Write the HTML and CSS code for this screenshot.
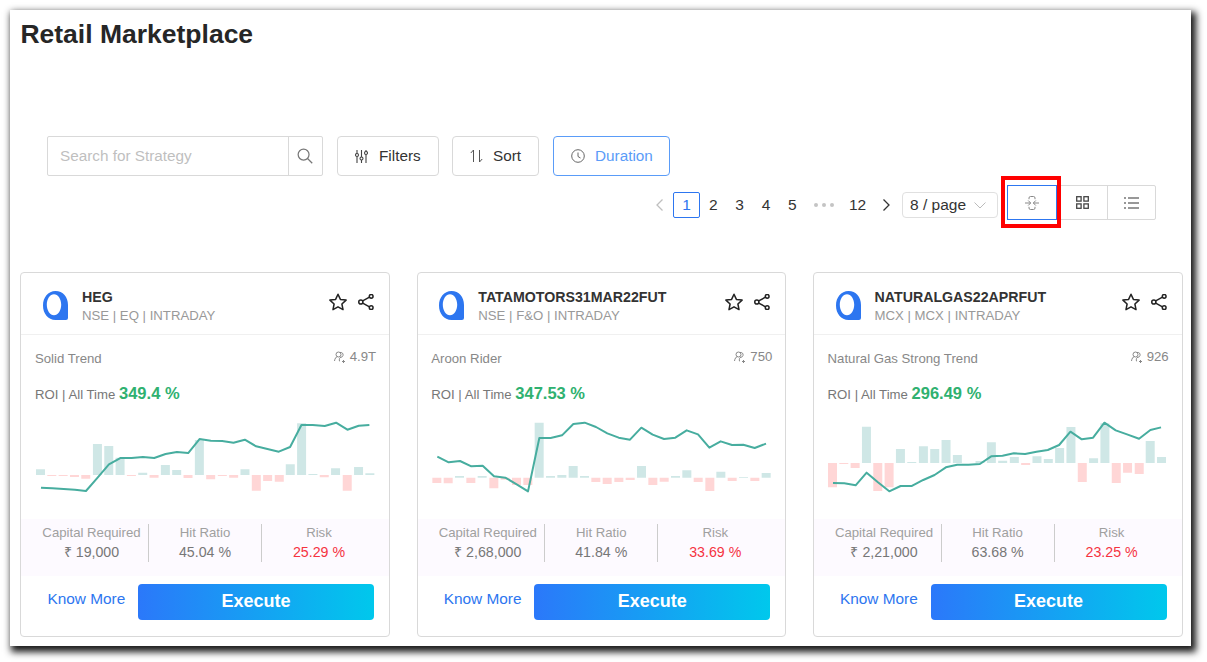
FILE: index.html
```html
<!DOCTYPE html>
<html>
<head>
<meta charset="utf-8">
<title>Retail Marketplace</title>
<link rel="stylesheet" href="styles.css">
</head>
<body>
<svg class="defs">
  <defs>
    <symbol id="logo" viewBox="0 0 25 29"><path fill-rule="evenodd" d="M12.500 0C20 0 25 6 25 14V27a2 2 0 0 1-2 2H12.500C5 29 0 22.500 0 14.500S5 0 12.500 0zM11 3.300C7 3.300 3.800 8 3.800 13.800S7 24.300 11 24.300s7.200-4.700 7.200-10.500S15 3.300 11 3.300z"/></symbol>
    <symbol id="star" viewBox="0 0 18 18"><path fill="none" stroke="currentColor" stroke-width="1.500" stroke-linejoin="round" d="M9 1.200l2.400 5.200 5.700.7-4.200 3.900 1.100 5.600L9 13.800l-5 2.800 1.100-5.600L.9 7.100l5.700-.7z"/></symbol>
    <symbol id="share" viewBox="0 0 17 17"><g fill="none" stroke="currentColor" stroke-width="1.600"><circle cx="3" cy="8.500" r="2.200"/><circle cx="14" cy="2.500" r="2"/><circle cx="14" cy="14.500" r="2"/><path d="M5 7.400l7.200-4M5 9.600l7.200 4"/></g></symbol>
    <symbol id="users" viewBox="0 0 12 12"><g fill="none" stroke="currentColor" stroke-width="1"><circle cx="4.500" cy="3.500" r="2.500"/><path d="M.5 10c.3-2.500 1.500-4 3-4.500M6 1.500c2-.5 3.500 1 3 3-.3 1-1 1.700-2 1.800-1.500 0-2 2-1.500 4M9.500 9v3M8 10.500h3"/></g></symbol>
  </defs>
</svg>
<div class="frame">
  <h1 class="title">Retail Marketplace</h1>

  <div class="toolbar">
    <div class="search">
      <span class="search-text">Search for Strategy</span>
      <span class="search-btn">
        <svg width="16" height="16" viewBox="0 0 17 17" fill="none" stroke="#777" stroke-width="1.300"><circle cx="7" cy="7" r="5.800"/><path d="M11.200 11.200l5 5"/></svg>
      </span>
    </div>
    <div class="btn btn-filters">
      <svg width="13" height="13" viewBox="0 0 13 13" fill="none" stroke="#444" stroke-width="1.100"><path d="M2 0v13M6.500 0v13M11 0v13"/><g fill="#fff"><circle cx="2" cy="5" r="1.500"/><circle cx="6.500" cy="8.500" r="1.500"/><circle cx="11" cy="3" r="1.500"/></g></svg>
      Filters
    </div>
    <div class="btn btn-sort">
      <svg width="13" height="14" viewBox="0 0 13 14" fill="none" stroke="#555" stroke-width="1"><path d="M3.500 13V1L.8 4M9.500 1v12l2.700-3"/></svg>
      Sort
    </div>
    <div class="btn btn-duration">
      <svg width="14" height="14" viewBox="0 0 14 14" fill="none" stroke="#666" stroke-width="1"><circle cx="7" cy="7" r="6.300"/><path d="M7 3.500V7.500L9.500 9"/></svg>
      Duration
    </div>
  </div>

  <div class="pager-row">
    <div class="pager">
      <span class="page-item arrow-off"><svg width="9" height="12" viewBox="0 0 9 12" fill="none" stroke="currentColor" stroke-width="1.300"><path d="M7.500 .5L2 6l5.500 5.500"/></svg></span>
      <span class="page-item page-on">1</span>
      <span class="page-item">2</span>
      <span class="page-item">3</span>
      <span class="page-item">4</span>
      <span class="page-item">5</span>
      <span class="page-dots"><i></i><i></i><i></i></span>
      <span class="page-item page-wide">12</span>
      <span class="page-item"><svg width="9" height="12" viewBox="0 0 9 12" fill="none" stroke="currentColor" stroke-width="1.300"><path d="M1.500 .5L7 6l-5.500 5.500"/></svg></span>
      <div class="page-size">8 / page
        <svg width="12" height="7" viewBox="0 0 12 7" fill="none" stroke="#bbb" stroke-width="1"><path d="M.5 .5L6 6 11.500 .5"/></svg>
      </div>
    </div>
    <div class="views">
      <div class="view view-on">
        <svg width="14" height="14" viewBox="0 0 14 14" fill="none" stroke="#888" stroke-width="1"><path d="M0 7h5.500M14 7H8.500M3.200 4.500L5.700 7 3.200 9.500M10.800 4.500L8.300 7l2.500 2.500M4 3.200V2a1.500 1.500 0 0 1 1.500-1.500h3A1.500 1.500 0 0 1 10 2v1.200M4 10.800V12a1.500 1.500 0 0 0 1.500 1.500h3A1.500 1.500 0 0 0 10 12v-1.200"/></svg>
      </div>
      <div class="view">
        <svg width="13" height="13" viewBox="0 0 13 13" fill="none" stroke="#444" stroke-width="1.300"><rect x=".7" y=".7" width="4.400" height="4.400"/><rect x="7.900" y=".7" width="4.400" height="4.400"/><rect x=".7" y="7.900" width="4.400" height="4.400"/><rect x="7.900" y="7.900" width="4.400" height="4.400"/></svg>
      </div>
      <div class="view">
        <svg width="15" height="12" viewBox="0 0 15 12" fill="none" stroke="#333" stroke-width="1.200"><path d="M0 1h2M4 1h11M0 6h2M4 6h11M0 11h2M4 11h11"/></svg>
      </div>
    </div>
  </div>

  <div class="cards">

    <div class="card">
      <div class="card-head">
        <svg class="logo"><use href="#logo"/></svg>
        <div class="card-name">
          <div class="symbol">HEG</div>
          <div class="market">NSE | EQ | INTRADAY</div>
        </div>
        <svg class="icon-star"><use href="#star"/></svg>
        <svg class="icon-share"><use href="#share"/></svg>
      </div>
      <div class="card-info">
        <span>Solid Trend</span>
        <span class="subs"><svg class="icon-users"><use href="#users"/></svg> 4.9T</span>
      </div>
      <div class="roi">ROI | All Time <b>349.4 %</b></div>
      <svg class="chart" viewBox="18 0 1104 345">
        <path class="bar-up" d="M63 210V193h27v17zM234 210V117h27v93zM268 210V123h27v87zM302 210V158h27v52zM370 210V203h27v7zM438 210V180h27v30zM472 210V195h27v15zM540 210V105h27v105zM677 210V193h27v17zM813 210V178h27v32zM847 210V55h27v155zM881 210V207h27v3zM949 210V190h27v20zM1018 210V186h27v24zM1052 210V205h27v5z"/>
        <path class="bar-down" d="M97 210V213h27v-3zM131 210V213h27v-3zM165 210V216h27v-6zM199 210V221h27v-11zM336 210V213h27v-3zM404 210V218h27v-8zM506 210V219h27v-9zM574 210V223h27v-13zM609 210V213h27v-3zM643 210V218h27v-8zM711 210V257h27v-47zM745 210V228h27v-18zM780 210V230h27v-20zM915 210V217h27v-7zM984 210V257h27v-47z"/>
        <polyline class="line" points="78,248 112,250 146,252 180,254 213,258 248,218 282,178 316,159 350,159 384,156 418,159 452,147 486,141 520,144 554,102 588,107 622,108 656,113 690,104 724,124 758,132 792,140 826,126 860,60 894,60 930,63 964,53 998,74 1032,62 1064,60"/>
      </svg>
      <div class="stats">
        <div class="stat"><div class="stat-label">Capital Required</div><div class="stat-value">₹ 19,000</div></div>
        <div class="stat"><div class="stat-label">Hit Ratio</div><div class="stat-value">45.04 %</div></div>
        <div class="stat"><div class="stat-label">Risk</div><div class="stat-value risk">25.29 %</div></div>
      </div>
      <div class="card-foot">
        <span class="know">Know More</span>
        <span class="execute">Execute</span>
      </div>
    </div>

    <div class="card">
      <div class="card-head">
        <svg class="logo"><use href="#logo"/></svg>
        <div class="card-name">
          <div class="symbol">TATAMOTORS31MAR22FUT</div>
          <div class="market">NSE | F&amp;O | INTRADAY</div>
        </div>
        <svg class="icon-star"><use href="#star"/></svg>
        <svg class="icon-share"><use href="#share"/></svg>
      </div>
      <div class="card-info">
        <span>Aroon Rider</span>
        <span class="subs"><svg class="icon-users"><use href="#users"/></svg> 750</span>
      </div>
      <div class="roi">ROI | All Time <b>347.53 %</b></div>
      <svg class="chart" viewBox="9 0 1101 345">
        <path class="bar-up" d="M119 218V213h27v5zM187 218V213h27v5zM358 218V53h27v165zM392 218V213h27v5zM426 218V210h27v8zM460 218V183h27v35zM494 218V213h27v5zM665 218V183h27v35zM767 218V213h27v5zM801 218V196h27v22zM903 218V200h27v18zM971 218V216h27v2zM1039 218V204h27v14z"/>
        <path class="bar-down" d="M51 218V234h27v-16zM85 218V235h27v-17zM153 218V234h27v-16zM222 218V250h27v-32zM256 218V224h27v-6zM290 218V240h27v-22zM324 218V240h27v-22zM528 218V231h27v-13zM562 218V237h27v-19zM597 218V231h27v-13zM631 218V225h27v-7zM699 218V240h27v-22zM733 218V230h27v-12zM835 218V231h27v-13zM870 218V258h27v-40zM937 218V228h27v-10zM1005 218V228h27v-10z"/>
        <polyline class="line" points="66,155 100,172 134,168 168,184 202,182 236,214 270,218 304,238 338,259 372,99 406,99 440,91 474,57 508,53 542,66 576,85 610,98 644,104 678,68 712,89 746,102 780,98 814,76 848,88 882,128 916,109 950,120 984,119 1018,129 1052,116"/>
      </svg>
      <div class="stats">
        <div class="stat"><div class="stat-label">Capital Required</div><div class="stat-value">₹ 2,68,000</div></div>
        <div class="stat"><div class="stat-label">Hit Ratio</div><div class="stat-value">41.84 %</div></div>
        <div class="stat"><div class="stat-label">Risk</div><div class="stat-value risk">33.69 %</div></div>
      </div>
      <div class="card-foot">
        <span class="know">Know More</span>
        <span class="execute">Execute</span>
      </div>
    </div>

    <div class="card">
      <div class="card-head">
        <svg class="logo"><use href="#logo"/></svg>
        <div class="card-name">
          <div class="symbol">NATURALGAS22APRFUT</div>
          <div class="market">MCX | MCX | INTRADAY</div>
        </div>
        <svg class="icon-star"><use href="#star"/></svg>
        <svg class="icon-share"><use href="#share"/></svg>
      </div>
      <div class="card-info">
        <span>Natural Gas Strong Trend</span>
        <span class="subs"><svg class="icon-users"><use href="#users"/></svg> 926</span>
      </div>
      <div class="roi">ROI | All Time <b>296.49 %</b></div>
      <svg class="chart" viewBox="12 0 1104 345">
        <path class="bar-up" d="M156 174V65h27v109zM258 174V132h27v42zM292 174V171h27v3zM327 174V124h27v50zM361 174V132h27v42zM395 174V105h27v69zM429 174V150h27v24zM497 174V168h27v6zM531 174V112h27v62zM565 174V167h27v7zM600 174V156h27v18zM668 174V154h27v20zM702 174V162h27v12zM736 174V129h27v45zM770 174V66h27v108zM838 174V160h27v14zM872 174V55h27v119zM1008 174V108h27v66zM1042 174V156h27v18z"/>
        <path class="bar-down" d="M54 174V247h27v-73zM88 174V177h27v-3zM122 174V189h27v-15zM190 174V258h27v-84zM224 174V247h27v-73zM634 174V180h27v-6zM804 174V231h27v-57zM906 174V234h27v-60zM940 174V203h27v-29zM975 174V207h27v-33z"/>
        <polyline class="line" points="69,234 103,235 137,241 170,203 204,232 238,259 272,243 306,243 340,225 374,210 408,187 442,179 476,179 510,177 544,154 578,152 612,145 646,147 680,140 714,135 748,120 782,80 816,103 850,98 884,53 918,76 952,88 988,101 1022,75 1054,67"/>
      </svg>
      <div class="stats">
        <div class="stat"><div class="stat-label">Capital Required</div><div class="stat-value">₹ 2,21,000</div></div>
        <div class="stat"><div class="stat-label">Hit Ratio</div><div class="stat-value">63.68 %</div></div>
        <div class="stat"><div class="stat-label">Risk</div><div class="stat-value risk">23.25 %</div></div>
      </div>
      <div class="card-foot">
        <span class="know">Know More</span>
        <span class="execute">Execute</span>
      </div>
    </div>

  </div>
</div>
</body>
</html>
```

FILE: styles.css
```css
html, body {
    margin: 0;
    padding: 0;
    background: #fff;
    overflow: hidden;
}
body {
    font-family: "Liberation Sans", Arial, sans-serif;
    color: #333;
    height: 662px;
}
.defs {
    display: none;
}
.frame {
    box-sizing: border-box;
    width: 1181px;
    height: 636px;
    margin: 10px 0 0 10px;
    padding-left: 10.4px;
    background: #fff;
    box-shadow: 3px 4px 7px 2px rgba(0, 0, 0, 0.9);
}

.title {
    margin: 0;
    padding-top: 8px;
    height: 32px;
    font-size: 26.5px;
    line-height: 32px;
    font-weight: bold;
    color: #262626;
}

/* toolbar */
.toolbar {
    display: flex;
    margin: 86px 0 0 26.6px;
}
.search {
    display: flex;
    box-sizing: border-box;
    width: 276px;
    height: 40px;
    margin-right: 14px;
    border: 1px solid #d9d9d9;
    border-radius: 2px;
}
.search-text {
    flex: 1;
    padding-left: 12px;
    font-size: 15.3px;
    line-height: 38px;
    color: #bfbfbf;
}
.search-btn {
    display: flex;
    align-items: center;
    justify-content: center;
    width: 33px;
    border-left: 1px solid #d9d9d9;
}
.btn {
    display: flex;
    align-items: center;
    box-sizing: border-box;
    height: 40px;
    padding-left: 17px;
    border: 1px solid #d9d9d9;
    border-radius: 4px;
    font-size: 15.3px;
    color: #333;
}
.btn svg {
    margin-right: 11px;
}
.btn-filters {
    width: 102px;
    margin-right: 13px;
}
.btn-sort {
    width: 87px;
    margin-right: 14px;
}
.btn-sort svg {
    margin-right: 10px;
}
.btn-duration {
    width: 117px;
    color: #5a9cf8;
    border-color: #5a9cf8;
}
.btn-duration svg {
    margin-right: 10px;
}

/* pagination and views */
.pager-row {
    display: flex;
    justify-content: flex-end;
    margin: 9px 35px 0 0;
}
.pager {
    display: flex;
    align-items: center;
    height: 26px;
    margin-top: 7px;
    font-size: 15.5px;
}
.page-item {
    display: flex;
    align-items: center;
    justify-content: center;
    box-sizing: border-box;
    width: 26.4px;
    height: 26px;
    color: #333;
}
.arrow-off {
    color: #bfbfbf;
}
.page-on {
    width: 27px;
    color: #2d76f0;
    border: 1px solid #2d76f0;
    border-radius: 2px;
}
.page-dots {
    display: flex;
    justify-content: center;
    gap: 4px;
    width: 36px;
}
.page-dots i {
    width: 4px;
    height: 4px;
    border-radius: 50%;
    background: #c4c4c4;
}
.page-wide {
    width: 32px;
}
.page-size {
    display: flex;
    align-items: center;
    box-sizing: border-box;
    width: 96px;
    height: 26px;
    margin: 0 9px 0 2px;
    padding-left: 7px;
    border: 1px solid #e0e0e0;
    border-radius: 4px;
}
.page-size svg {
    margin-left: 8px;
}
.views {
    display: flex;
    height: 35px;
    box-sizing: border-box;
    border: 1px solid #d9d9d9;
    border-radius: 2px;
}
.view {
    display: flex;
    align-items: center;
    justify-content: center;
    box-sizing: border-box;
    width: 50px;
    border-left: 1px solid #d9d9d9;
}
.view:last-child {
    width: 48px;
}
.view-on {
    position: relative;
    margin: -1px 0 -1px -1px;
    border: 1px solid #2d76f0;
}
.view-on::after {
    content: "";
    position: absolute;
    left: -7px;
    top: -10px;
    width: 52px;
    height: 44px;
    border: 4px solid #f00;
}

/* cards */
.cards {
    display: grid;
    grid-template-columns: repeat(3, 369.7px);
    column-gap: 26.6px;
    margin-top: 52px;
}
.card {
    box-sizing: border-box;
    height: 365px;
    border: 1px solid #d9d9d9;
    border-radius: 4px;
    background: #fff;
}
.card-head {
    display: flex;
    box-sizing: border-box;
    height: 62px;
    padding: 18px 15px 0 21.6px;
    border-bottom: 1px solid #f0f0f0;
}
.logo {
    width: 25px;
    height: 29px;
    margin-right: 14px;
    fill: #2d76f0;
}
.card-name {
    flex: 1;
    margin-top: -2px;
}
.symbol {
    font-size: 14.2px;
    line-height: 17px;
    font-weight: bold;
    color: #333;
}
.market {
    margin-top: 2px;
    font-size: 13.2px;
    line-height: 16px;
    color: #999;
}
.icon-star {
    width: 18px;
    height: 18px;
    margin: 2px 11px 0 0;
    color: #222;
}
.icon-share {
    width: 16px;
    height: 16px;
    margin-top: 3px;
    color: #222;
}
.card-info {
    display: flex;
    justify-content: space-between;
    height: 18px;
    margin-top: 15px;
    padding: 0 13px 0 13.6px;
    font-size: 13.2px;
    line-height: 18px;
    color: #888;
}
.subs {
    display: flex;
    align-items: center;
    margin-top: -2px;
    height: 18px;
}
.icon-users {
    width: 12px;
    height: 12px;
    margin-right: 4px;
}
.roi {
    height: 18px;
    margin: 16px 0 3px;
    padding-left: 13.6px;
    font-size: 13.2px;
    line-height: 18px;
    color: #777;
}
.roi b {
    font-size: 16.500px;
    color: #2fb170;
}
.chart {
    display: block;
    width: 100%;
    height: 115px;
}
.bar-up {
    fill: #cfe7e6;
}
.bar-down {
    fill: #ffd6d6;
}
.line {
    fill: none;
    stroke: #47ad9f;
    stroke-width: 6;
    stroke-linejoin: round;
}
.stats {
    display: grid;
    grid-template-columns: 113px 113px 115px;
    box-sizing: border-box;
    height: 57px;
    margin-top: -1px;
    padding: 5px 0 0 13.6px;
    background: #fdfaff;
}
.stat {
    height: 38px;
    border-left: 1px solid #ccc;
    text-align: center;
}
.stat:first-child {
    border-left: 0;
}
.stat-label {
    font-size: 13.2px;
    line-height: 18px;
    color: #a0a0a0;
}
.stat-value {
    margin-top: 1px;
    font-size: 14.2px;
    line-height: 19px;
    color: #777;
}
.risk {
    color: #f5333f;
}
.card-foot {
    display: flex;
    padding: 8px 15px 0 26px;
}
.know {
    width: 90.6px;
    font-size: 15.4px;
    line-height: 29px;
    color: #2d76f0;
}
.execute {
    flex: 1;
    height: 36px;
    border-radius: 4px;
    background: linear-gradient(90deg, #2b78fa, #00c8ec);
    color: #fff;
    font-size: 18px;
    font-weight: bold;
    line-height: 35px;
    text-align: center;
}
```
